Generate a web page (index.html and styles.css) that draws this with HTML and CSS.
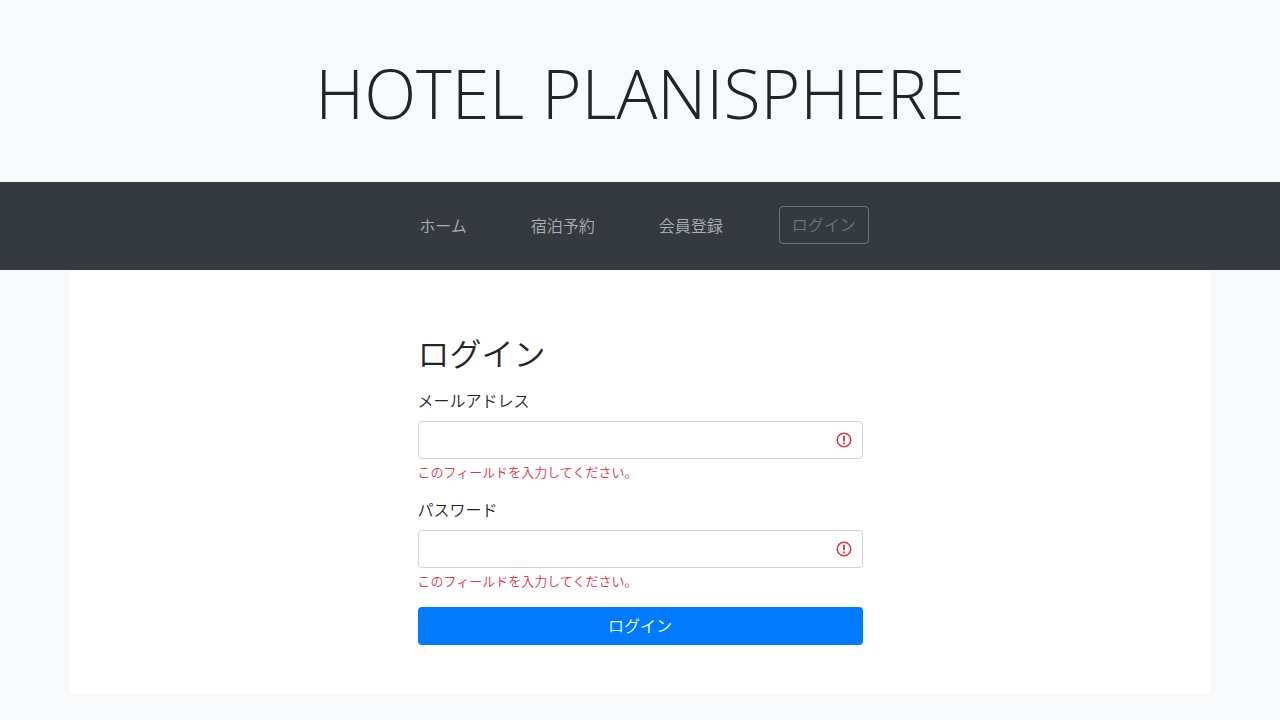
FILE: index.html
```html
<!DOCTYPE html>
<html lang="ja">
<head>
<meta charset="utf-8">
<meta name="viewport" content="width=device-width, initial-scale=1">
<title>ログイン | HOTEL PLANISPHERE</title>
<link rel="stylesheet" href="styles.css">
</head>
<body>
<header class="masthead"><h1 class="brand">HOTEL PLANISPHERE</h1></header>
<nav class="navbar">
  <ul class="nav-list">
    <li><a class="nav-link" href="#">ホーム</a></li>
    <li><a class="nav-link" href="#">宿泊予約</a></li>
    <li><a class="nav-link" href="#">会員登録</a></li>
    <li><button class="nav-login" type="button" disabled>ログイン</button></li>
  </ul>
</nav>
<main class="container">
  <form class="login" novalidate>
    <h2 class="title">ログイン</h2>
    <div class="field">
      <label class="label" for="email">メールアドレス</label>
      <div class="control">
        <input class="input" id="email" type="email" aria-describedby="email-error">
        <svg class="alert" viewBox="0 0 16 16" aria-hidden="true"><circle cx="8" cy="8" r="6.8"/><path class="mark" d="M8 3.8v5.4M8 10.4v1.9"/></svg>
      </div>
      <p class="error" id="email-error">このフィールドを入力してください。</p>
    </div>
    <div class="field">
      <label class="label" for="password">パスワード</label>
      <div class="control">
        <input class="input" id="password" type="password" aria-describedby="password-error">
        <svg class="alert" viewBox="0 0 16 16" aria-hidden="true"><circle cx="8" cy="8" r="6.8"/><path class="mark" d="M8 3.8v5.4M8 10.4v1.9"/></svg>
      </div>
      <p class="error" id="password-error">このフィールドを入力してください。</p>
    </div>
    <button class="submit" type="submit">ログイン</button>
  </form>
</main>
</body>
</html>
```
FILE: styles.css
```css
*, *::before, *::after { box-sizing: border-box; }
body {
  margin: 0;
  background: #f8f9fa;
  color: #212529;
  font: 16px/24px "Noto Sans CJK JP", sans-serif;
  font-weight: 350;
}
.masthead { padding: 50px 16px 46px; text-align: center; }
.brand {
  margin: 0;
  font-family: "Open Sans", "Noto Sans", sans-serif;
  font-size: 68px;
  line-height: 86px;
  font-weight: 300;
}
.navbar { padding: 24px 16px; background: #343a40; }
.nav-list {
  display: flex;
  justify-content: center;
  align-items: flex-start;
  gap: 48px;
  margin: 0;
  padding: 0;
  list-style: none;
}
.nav-link {
  display: block;
  padding: 7px 8px 9px;
  color: rgba(255, 255, 255, .6);
  text-decoration: none;
}
.nav-login {
  display: block;
  padding: 5px 12px 7px;
  border: 1px solid #6c757d;
  border-radius: 4px;
  background: transparent;
  color: #6c757d;
  font: inherit;
}
.container {
  max-width: 1140px;
  margin: 0 auto;
  padding: 64px 16px 48px;
  background: #fff;
}
.login { max-width: 445px; margin: 0 auto; }
.title { margin: 0 0 19px; font-size: 32px; line-height: 36px; font-weight: 350; }
.field { margin-bottom: 18px; }
.label { display: block; margin-bottom: 10px; line-height: 22px; }
.control { position: relative; }
.input {
  display: block;
  width: 100%;
  height: 38px;
  padding: 6px 36px 6px 12px;
  border: 1px solid #ced4da;
  border-radius: 4px;
  background: #fff;
  font: inherit;
}
.alert {
  position: absolute;
  top: 11px;
  right: 11px;
  width: 16px;
  height: 16px;
  fill: none;
  stroke: #dc3545;
  stroke-width: 1.5;
}
.mark { stroke-width: 1.9; }
.error { margin: 4px 0 0; color: #dc3545; font-size: 13px; line-height: 17px; }
.submit {
  display: block;
  width: 100%;
  padding: 6px 12px 8px;
  border: 0;
  border-radius: 4px;
  background: #007bff;
  color: #fff;
  font: inherit;
}
```
